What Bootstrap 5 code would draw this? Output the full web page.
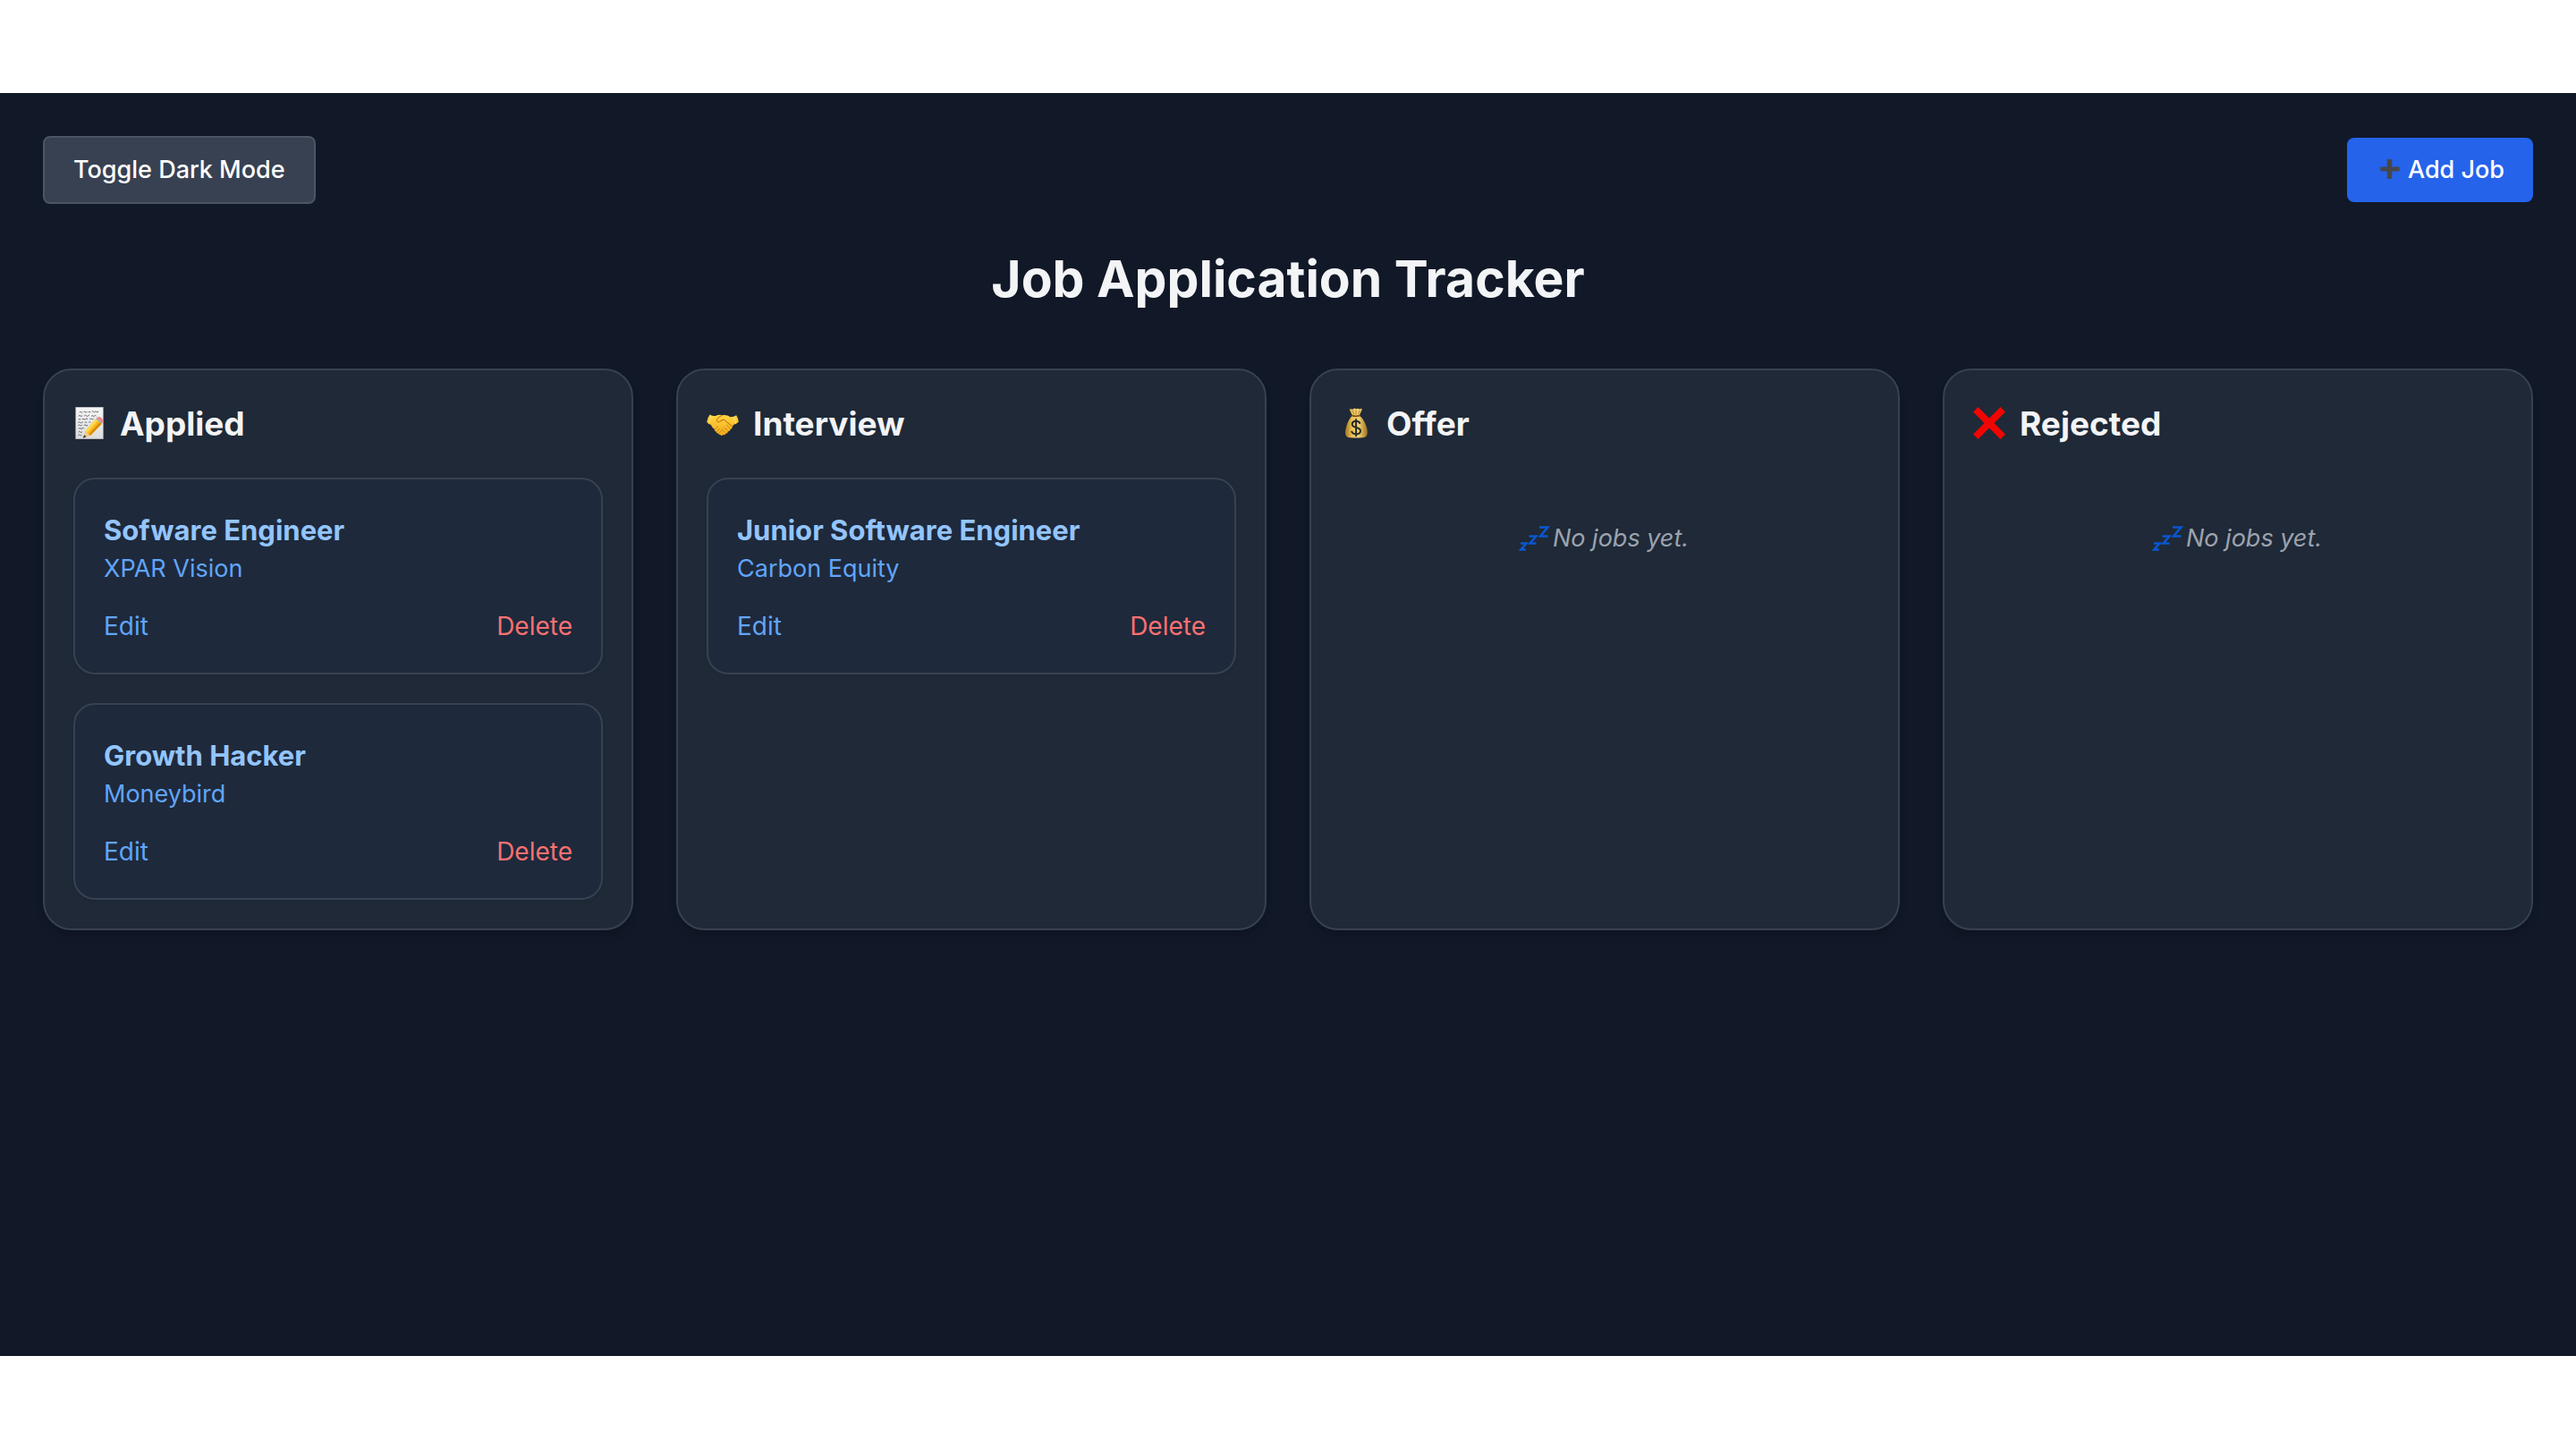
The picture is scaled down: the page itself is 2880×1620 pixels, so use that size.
<!DOCTYPE html>
<html lang="en">
<head>
<meta charset="utf-8">
<meta name="viewport" content="width=device-width, initial-scale=1">
<title>Job Application Tracker</title>
<link href="https://cdn.jsdelivr.net/npm/bootstrap@5.3.0/dist/css/bootstrap.min.css" rel="stylesheet">
<style>
  body { font-family: Inter, "Liberation Sans", sans-serif; font-size: 27px; line-height: 40px; background: #fff; padding: 104px 0; min-height: 100vh; }
  .tracker { background: #111827; padding: 48px; color: #f3f4f6; }
  .btn-tool { --bs-btn-font-size: 27px; --bs-btn-line-height: 40px; --bs-btn-font-weight: 500; --bs-btn-padding-x: 32px; --bs-btn-padding-y: 16px; --bs-btn-border-radius: 8px; --bs-btn-color: #fff; --bs-btn-hover-color: #fff; }
  .btn-theme { --bs-btn-bg: #374151; --bs-btn-border-color: #4b5563; --bs-btn-border-width: 2px; --bs-btn-hover-bg: #4b5563; }
  .btn-new { --bs-btn-bg: #2563eb; --bs-btn-border-width: 0; --bs-btn-hover-bg: #1d4ed8; }
  .page-title { font-size: 57px; line-height: 72px; font-weight: 700; margin: 48px 0 64px; }
  .board { --bs-gutter-x: 48px; --bs-gutter-y: 48px; }
  .lane { background: #1f2937; border: 2px solid #374151; border-radius: 32px; padding: 32px; box-shadow: 0 8px 12px -2px rgba(0,0,0,.1), 0 4px 8px -4px rgba(0,0,0,.1); }
  .lane-title { font-size: 37px; line-height: 56px; font-weight: 700; gap: 16px; margin: 0 0 32px; }
  .job { background: #1e293b; border: 2px solid #374151; border-radius: 24px; padding: 32px; box-shadow: 0 2px 4px rgba(0,0,0,.05); }
  .job + .job { margin-top: 32px; }
  .job-title { font-size: 31px; line-height: 50px; font-weight: 700; color: #93c5fd; margin: 0 0 -2px; }
  .job-company { color: #60a5fa; margin: 0 0 24px; }
  .btn-text { --bs-btn-padding-x: 0; --bs-btn-padding-y: 0; --bs-btn-border-width: 0; --bs-btn-font-size: 28px; --bs-btn-line-height: 40px; }
  .btn-edit { --bs-btn-color: #60a5fa; --bs-btn-hover-color: #93c5fd; }
  .btn-delete { --bs-btn-color: #f87171; --bs-btn-hover-color: #fca5a5; }
  .no-jobs { color: #9ca3af; margin: 0; padding: 48px 0; }
  .emo { width: 36px; height: 36px; flex: none; overflow: visible; }
  .emo-plus { width: 28px; height: 28px; }
  @media (min-width: 1200px) { .tracker { min-height: calc(100vh - 208px); } }
</style>
</head>
<body>
<main class="tracker">
  <div class="d-flex justify-content-between align-items-center">
    <button type="button" class="btn btn-tool btn-theme">Toggle Dark Mode</button>
    <button type="button" class="btn btn-tool btn-new d-flex align-items-center gap-2">
      <svg class="emo emo-plus" viewBox="0 0 28 28" aria-hidden="true"><path d="M13.500 2h4a.8.8 0 0 1 .8.8v7.600h7.600a.8.8 0 0 1 .8.8v3.600a.8.8 0 0 1-.8.8h-7.600v7.600a.8.8 0 0 1-.8.8h-4a.8.8 0 0 1-.8-.8v-7.600H6.100a.8.8 0 0 1-.8-.8v-3.600a.8.8 0 0 1 .8-.8h6.600V2.800a.8.8 0 0 1 .8-.8z" fill="#45474d"/></svg>
      <span>Add Job</span>
    </button>
  </div>

  <h1 class="page-title text-center">Job Application Tracker</h1>

  <div class="row row-cols-1 row-cols-md-2 row-cols-xl-4 board">
    <div class="col">
      <section class="lane h-100">
        <h2 class="lane-title d-flex align-items-center">
          <svg class="emo" viewBox="0 1 36 36" aria-hidden="true">
            <defs><linearGradient id="sheet" x1="0" y1="0" x2="0" y2="1"><stop offset="0" stop-color="#f6f6f6"/><stop offset="1" stop-color="#dcdddd"/></linearGradient></defs>
            <rect x="2.800" y="0.300" width="30.400" height="35.400" fill="url(#sheet)" stroke="#c3c5c7" stroke-width=".6"/>
            <g fill="none" stroke="#55585b" stroke-width=".9" stroke-linecap="round">
              <path d="M7 5.800q1-1.400 1.600 0t1.700-.2M12 5.500q1-1 1.700.2t1.500-.2M17 5.800q1-1.500 2 0M21 5q1-.8 1.600.4t1.800 0 1.600.2q1 1 2-.4"/>
              <path d="M6 10q1-1.200 2 0t2-.2M12.500 9.800q1-1.300 2 0t2 0 1.500-.3M20.500 10q.8-1.200 1.600 0t1.600 0 1.600-.2"/>
              <path d="M6 13.800q1-1 2 0M10 13.600q1-1.200 2 0t1.800 0 2-.2M18.500 13.500q1-1 2 0t2-.2"/>
              <path d="M5.500 17.300q1-1.200 2 0t1.800 0 1.500 0M13 17.200q1-1.200 2 0M17.500 17q.8-1 1.800 0"/>
              <path d="M5.500 20.500q1-1 2 0t2 0M12 20.500q1-1.200 2 0t2 0"/>
              <path d="M6 24q1-1.200 2 0t2-.2 1.700.2M5.800 28q1-1.400 2 0t2-.2M5.500 31.500q1-1 2 0t1.700 0"/>
            </g>
            <path d="M11.500 34.200l1.800-7.200L25 13.600l6.800 5.200L19 32z" fill="#f7b81c"/>
            <path d="M13.300 27L25 13.600l2.300 1.700L15.600 29z" fill="#ffd94a"/>
            <path d="M17.300 30.600L29.600 17l2.200 1.800L19 32z" fill="#d98b08"/>
            <path d="M11.500 34.200l1.800-7.200 2.300 2 1.700 1.600L19 32z" fill="#ecc995"/>
            <path d="M10.800 35l1.300-3.800 2.300 2z" fill="#303030"/>
            <path d="M25 13.600l1.600-1.800 6.600 5.300-1.400 1.700z" fill="#a9b0b5"/>
            <path d="M26.600 11.800q1.900-1.800 4.600.3t2 4.700q-.4 1-1 1.200z" fill="#f2828b"/>
          </svg>
          <span>Applied</span>
        </h2>
        <article class="job">
          <h3 class="job-title">Sofware Engineer</h3>
          <p class="job-company">XPAR Vision</p>
          <div class="d-flex justify-content-between">
            <button type="button" class="btn btn-text btn-edit">Edit</button>
            <button type="button" class="btn btn-text btn-delete">Delete</button>
          </div>
        </article>
        <article class="job">
          <h3 class="job-title">Growth Hacker</h3>
          <p class="job-company">Moneybird</p>
          <div class="d-flex justify-content-between">
            <button type="button" class="btn btn-text btn-edit">Edit</button>
            <button type="button" class="btn btn-text btn-delete">Delete</button>
          </div>
        </article>
      </section>
    </div>

    <div class="col">
      <section class="lane h-100">
        <h2 class="lane-title d-flex align-items-center">
          <svg class="emo" viewBox="0 1 36 36" aria-hidden="true">
            <defs><linearGradient id="skin" x1="0" y1="0" x2="0" y2="1"><stop offset="0" stop-color="#ffd544"/><stop offset="1" stop-color="#f3ab1b"/></linearGradient></defs>
            <path d="M3.600 8.500Q1 12 .2 16.800q1.300 2.300 4.600 3.200 1.500 3.500 4.300 5.200-.5 2 1.700 2.600.3 2 2.500 1.900.5 1.800 2.400 1.600 1.200 1.300 2.800-.3 2 .8 2.700-1.300 2.300.2 2.700-2.200 2.300-.4 2.600-2.300 2.200-.8 2.600-3.600l1.500-2q3-.4 5.200-3-.3-3.500-2.600-7.300-2.800 2-6.500 2-4.600-3-9.400-2-3.500-1.100-7.200.6-3.500.6-6.500-1.400z" fill="url(#skin)"/>
            <path d="M17.400 9.300q-4.400 1.700-6.300 5.400.6 2.700 3.500 1.800 2-2.200 4.700-2.400 4.300 3.700 9.300 7.500" fill="none" stroke="#c97c0d" stroke-width="1.100" stroke-linecap="round" stroke-linejoin="round"/>
            <path d="M22.500 20.500l4 3.500M19.500 22.700l3.800 3.500M16.800 25l3.200 3M9.300 25l3-3.300M11.300 27.700l3.200-3.500M13.800 29.600l2.700-3" fill="none" stroke="#cf850f" stroke-width="1" stroke-linecap="round"/>
            <path d="M5 10.500q-1.600 3-1.800 6M30.500 11.700q1.600 2.800 2 6" fill="none" stroke="#ffe47a" stroke-width="1" stroke-linecap="round"/>
          </svg>
          <span>Interview</span>
        </h2>
        <article class="job">
          <h3 class="job-title">Junior Software Engineer</h3>
          <p class="job-company">Carbon Equity</p>
          <div class="d-flex justify-content-between">
            <button type="button" class="btn btn-text btn-edit">Edit</button>
            <button type="button" class="btn btn-text btn-delete">Delete</button>
          </div>
        </article>
      </section>
    </div>

    <div class="col">
      <section class="lane h-100">
        <h2 class="lane-title d-flex align-items-center">
          <svg class="emo" viewBox="0 1 36 36" aria-hidden="true">
            <defs><linearGradient id="sack" x1="0" y1="0" x2="1" y2="0"><stop offset="0" stop-color="#a8761d"/><stop offset=".3" stop-color="#e9c25a"/><stop offset=".6" stop-color="#f3d375"/><stop offset="1" stop-color="#a06f1a"/></linearGradient></defs>
            <path d="M10.500 2.500q2-.8 3.800.2 2-2 4-.4 2.200-1.300 3.600.3 1.500-1.400 3.100-.2l-3.200 7.200q5.500 4.300 8.300 13.400 2.600 10.600-4 11.200-7.600.7-15.600 0-6.400-.8-3.600-11.200Q9 14.600 14 9.600z" fill="url(#sack)"/>
            <path d="M13.600 9.700q4.200 1.300 8.500 0" fill="none" stroke="#7c4f12" stroke-width="1.800" stroke-linecap="round"/>
            <path d="M14 4l2 4.500M18 3.500v5M22 4l-1.500 4.500" fill="none" stroke="#a9751f" stroke-width=".8"/>
            <path d="M22.500 18.700q-.8-3-4.400-3-4.300.1-4.400 3.600.1 2.700 4.500 3.600 4.700.9 4.800 3.800-.2 3.600-4.700 3.700-4.500-.1-5.100-3.600M18.100 13.200v19.800" fill="none" stroke="#282a24" stroke-width="2"/>
          </svg>
          <span>Offer</span>
        </h2>
        <p class="no-jobs d-flex justify-content-center align-items-center fst-italic">
          <svg class="emo" viewBox="5 0 36 36" aria-hidden="true"><path id="zzz" d="M5 23.500h6.500L5.300 30.500h5.500M14.500 15.500h8L15.500 23.500h7M26 5.500h9.500L27 15.500h8.500" fill="none" stroke="#0b57d0" stroke-width="2.500"/></svg>
          <span>No jobs yet.</span>
        </p>
      </section>
    </div>

    <div class="col">
      <section class="lane h-100">
        <h2 class="lane-title d-flex align-items-center">
          <svg class="emo" viewBox="0 1 36 36" aria-hidden="true"><path d="M5.500 0L18 12.500 30.500 0 36 5.500 23.500 18 36 30.500 30.500 36 18 23.500 5.500 36 0 30.500 12.500 18 0 5.500z" fill="#f20500"/></svg>
          <span>Rejected</span>
        </h2>
        <p class="no-jobs d-flex justify-content-center align-items-center fst-italic">
          <svg class="emo" viewBox="5 0 36 36" aria-hidden="true"><use href="#zzz"/></svg>
          <span>No jobs yet.</span>
        </p>
      </section>
    </div>
  </div>
</main>
<script src="https://cdn.jsdelivr.net/npm/bootstrap@5.3.0/dist/js/bootstrap.bundle.min.js"></script>
</body>
</html>
